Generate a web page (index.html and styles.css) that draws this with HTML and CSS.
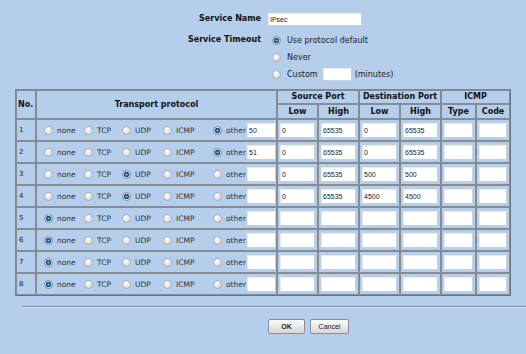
FILE: index.html
```html
<!DOCTYPE html>
<html>
<head>
<meta charset="utf-8">
<link rel="stylesheet" href="styles.css">
</head>
<body>
<div class="top">
  <div class="lbl name-lbl">Service Name</div>
  <div><input class="txt name-in" type="text" value="IPsec"></div>
  <div class="lbl">Service Timeout</div>
  <div class="opts">
    <div class="line"><input class="rb" type="radio" name="to" checked><span>Use protocol default</span></div>
    <div class="line"><input class="rb" type="radio" name="to"><span>Never</span></div>
    <div class="line"><input class="rb" type="radio" name="to"><span>Custom</span><input class="txt custom-in" type="text"><span class="mins">(minutes)</span></div>
  </div>
</div>

<table class="grid">
  <colgroup>
    <col class="c-no"><col class="c-tp"><col class="c-p"><col class="c-p"><col class="c-p"><col class="c-p"><col class="c-i"><col class="c-i2">
  </colgroup>
  <thead>
    <tr class="h1">
      <th rowspan="2" class="no-h">No.</th>
      <th rowspan="2">Transport protocol</th>
      <th colspan="2">Source Port</th>
      <th colspan="2">Destination Port</th>
      <th colspan="2">ICMP</th>
    </tr>
    <tr class="h2">
      <th>Low</th><th>High</th><th>Low</th><th>High</th><th>Type</th><th>Code</th>
    </tr>
  </thead>
  <tbody>
    <tr>
      <td class="no">1</td>
      <td class="tp"><div class="prot"><span class="opt o1"><input class="rb" type="radio" name="p1"><span>none</span></span><span class="opt o2"><input class="rb" type="radio" name="p1"><span>TCP</span></span><span class="opt o3"><input class="rb" type="radio" name="p1"><span>UDP</span></span><span class="opt o4"><input class="rb" type="radio" name="p1"><span>ICMP</span></span><span class="opt o5"><input class="rb" type="radio" name="p1" checked><span>other</span></span><input class="txt oth" type="text" value="50"></div></td>
      <td><input class="txt" type="text" value="0"></td><td><input class="txt" type="text" value="65535"></td><td><input class="txt" type="text" value="0"></td><td><input class="txt" type="text" value="65535"></td><td><input class="txt" type="text"></td><td><input class="txt" type="text"></td>
    </tr>
    <tr>
      <td class="no">2</td>
      <td class="tp"><div class="prot"><span class="opt o1"><input class="rb" type="radio" name="p2"><span>none</span></span><span class="opt o2"><input class="rb" type="radio" name="p2"><span>TCP</span></span><span class="opt o3"><input class="rb" type="radio" name="p2"><span>UDP</span></span><span class="opt o4"><input class="rb" type="radio" name="p2"><span>ICMP</span></span><span class="opt o5"><input class="rb" type="radio" name="p2" checked><span>other</span></span><input class="txt oth" type="text" value="51"></div></td>
      <td><input class="txt" type="text" value="0"></td><td><input class="txt" type="text" value="65535"></td><td><input class="txt" type="text" value="0"></td><td><input class="txt" type="text" value="65535"></td><td><input class="txt" type="text"></td><td><input class="txt" type="text"></td>
    </tr>
    <tr>
      <td class="no">3</td>
      <td class="tp"><div class="prot"><span class="opt o1"><input class="rb" type="radio" name="p3"><span>none</span></span><span class="opt o2"><input class="rb" type="radio" name="p3"><span>TCP</span></span><span class="opt o3"><input class="rb" type="radio" name="p3" checked><span>UDP</span></span><span class="opt o4"><input class="rb" type="radio" name="p3"><span>ICMP</span></span><span class="opt o5"><input class="rb" type="radio" name="p3"><span>other</span></span><input class="txt oth" type="text"></div></td>
      <td><input class="txt" type="text" value="0"></td><td><input class="txt" type="text" value="65535"></td><td><input class="txt" type="text" value="500"></td><td><input class="txt" type="text" value="500"></td><td><input class="txt" type="text"></td><td><input class="txt" type="text"></td>
    </tr>
    <tr>
      <td class="no">4</td>
      <td class="tp"><div class="prot"><span class="opt o1"><input class="rb" type="radio" name="p4"><span>none</span></span><span class="opt o2"><input class="rb" type="radio" name="p4"><span>TCP</span></span><span class="opt o3"><input class="rb" type="radio" name="p4" checked><span>UDP</span></span><span class="opt o4"><input class="rb" type="radio" name="p4"><span>ICMP</span></span><span class="opt o5"><input class="rb" type="radio" name="p4"><span>other</span></span><input class="txt oth" type="text"></div></td>
      <td><input class="txt" type="text" value="0"></td><td><input class="txt" type="text" value="65535"></td><td><input class="txt" type="text" value="4500"></td><td><input class="txt" type="text" value="4500"></td><td><input class="txt" type="text"></td><td><input class="txt" type="text"></td>
    </tr>
    <tr>
      <td class="no">5</td>
      <td class="tp"><div class="prot"><span class="opt o1"><input class="rb" type="radio" name="p5" checked><span>none</span></span><span class="opt o2"><input class="rb" type="radio" name="p5"><span>TCP</span></span><span class="opt o3"><input class="rb" type="radio" name="p5"><span>UDP</span></span><span class="opt o4"><input class="rb" type="radio" name="p5"><span>ICMP</span></span><span class="opt o5"><input class="rb" type="radio" name="p5"><span>other</span></span><input class="txt oth" type="text"></div></td>
      <td><input class="txt" type="text"></td><td><input class="txt" type="text"></td><td><input class="txt" type="text"></td><td><input class="txt" type="text"></td><td><input class="txt" type="text"></td><td><input class="txt" type="text"></td>
    </tr>
    <tr>
      <td class="no">6</td>
      <td class="tp"><div class="prot"><span class="opt o1"><input class="rb" type="radio" name="p6" checked><span>none</span></span><span class="opt o2"><input class="rb" type="radio" name="p6"><span>TCP</span></span><span class="opt o3"><input class="rb" type="radio" name="p6"><span>UDP</span></span><span class="opt o4"><input class="rb" type="radio" name="p6"><span>ICMP</span></span><span class="opt o5"><input class="rb" type="radio" name="p6"><span>other</span></span><input class="txt oth" type="text"></div></td>
      <td><input class="txt" type="text"></td><td><input class="txt" type="text"></td><td><input class="txt" type="text"></td><td><input class="txt" type="text"></td><td><input class="txt" type="text"></td><td><input class="txt" type="text"></td>
    </tr>
    <tr>
      <td class="no">7</td>
      <td class="tp"><div class="prot"><span class="opt o1"><input class="rb" type="radio" name="p7" checked><span>none</span></span><span class="opt o2"><input class="rb" type="radio" name="p7"><span>TCP</span></span><span class="opt o3"><input class="rb" type="radio" name="p7"><span>UDP</span></span><span class="opt o4"><input class="rb" type="radio" name="p7"><span>ICMP</span></span><span class="opt o5"><input class="rb" type="radio" name="p7"><span>other</span></span><input class="txt oth" type="text"></div></td>
      <td><input class="txt" type="text"></td><td><input class="txt" type="text"></td><td><input class="txt" type="text"></td><td><input class="txt" type="text"></td><td><input class="txt" type="text"></td><td><input class="txt" type="text"></td>
    </tr>
    <tr>
      <td class="no">8</td>
      <td class="tp"><div class="prot"><span class="opt o1"><input class="rb" type="radio" name="p8" checked><span>none</span></span><span class="opt o2"><input class="rb" type="radio" name="p8"><span>TCP</span></span><span class="opt o3"><input class="rb" type="radio" name="p8"><span>UDP</span></span><span class="opt o4"><input class="rb" type="radio" name="p8"><span>ICMP</span></span><span class="opt o5"><input class="rb" type="radio" name="p8"><span>other</span></span><input class="txt oth" type="text"></div></td>
      <td><input class="txt" type="text"></td><td><input class="txt" type="text"></td><td><input class="txt" type="text"></td><td><input class="txt" type="text"></td><td><input class="txt" type="text"></td><td><input class="txt" type="text"></td>
    </tr>
  </tbody>
</table>

<div class="rule"></div>

<div class="buttons">
  <button class="btn btn-ok" type="button">OK</button>
  <button class="btn btn-cancel" type="button">Cancel</button>
</div>
</body>
</html>
```

FILE: styles.css
```css
html, body {
  margin: 0;
  padding: 0;
  background: #b4ceeb;
}
body {
  width: 526px;
  height: 354px;
  overflow: hidden;
  font-family: "DejaVu Sans", Verdana, sans-serif;
  font-size: 8px;
  color: #222;
}

.top {
  display: grid;
  grid-template-columns: 111px auto;
  column-gap: 6px;
  row-gap: 6px;
  padding: 12px 0 0 150px;
  align-items: start;
}
.lbl {
  font-weight: bold;
  color: #111;
  text-align: right;
  line-height: 16px;
}
.name-lbl {
  line-height: 14px;
}
.txt {
  box-sizing: border-box;
  margin: 0;
  background: #fff;
  border: 1px solid #c3d0de;
  box-shadow: inset 1px 1px 0 #e4eaf1;
  font-family: "Liberation Sans", Arial, sans-serif;
  font-size: 7px;
  color: #222;
  padding: 0 2px;
  outline: none;
}
.name-in {
  display: block;
  width: 95px;
  height: 14px;
}
.opts {
  display: flex;
  flex-direction: column;
  gap: 1px;
}
.line {
  display: flex;
  align-items: center;
  height: 16px;
}
.line .rb {
  margin: 0 6px 0 5px;
}
.custom-in {
  width: 30px;
  height: 14px;
  margin-left: 4px;
}
.mins {
  margin-left: 3px;
}

.rb {
  appearance: none;
  -webkit-appearance: none;
  box-sizing: border-box;
  width: 9px;
  height: 9px;
  margin: 0;
  flex: none;
  border-radius: 50%;
  border: 1px solid #aeb2b7;
  background: radial-gradient(circle at 40% 35%, #fdfdfd 0, #e4e4e4 55%, #c8c8c8 100%);
}
.rb:checked {
  border-color: #7d8896;
  background: radial-gradient(circle at 50% 50%, #8fd6ff 0, #2d8fe0 0.9px, #124f98 1.9px, #0d3568 2.4px, #e2e5e9 2.9px, #c8ccd2 100%);
}

.grid {
  margin: 7px 0 0 15px;
  width: 495px;
  table-layout: fixed;
  border-collapse: separate;
  border-spacing: 0;
  border: 1px solid #7d848c;
  border-right-color: #6e757d;
  border-bottom-color: #6e757d;
}
.c-no { width: 20px; }
.c-tp { width: 241px; }
.c-p { width: 41px; }
.c-i { width: 35px; }
.c-i2 { width: 34px; }

.grid th, .grid td {
  border: 1px solid #868c93;
  padding: 0;
}
.grid th {
  font-weight: bold;
  color: #111;
  text-align: center;
}
.h1 th {
  height: 12px;
  line-height: 12px;
}
.h2 th {
  height: 13px;
  line-height: 13px;
}
.grid th.no-h {
  text-align: left;
  padding-left: 1px;
}
.grid td {
  padding: 2px 2px 2px 1px;
  height: 16px;
}
.grid td.no {
  font-size: 7px;
  padding-left: 2px;
  vertical-align: middle;
}
.grid td .txt {
  display: block;
  width: 100%;
  height: 16px;
}
.grid td.tp {
  padding: 2px 1px 2px 7px;
  font-size: 7.5px;
  color: #333;
}
.prot {
  display: flex;
  align-items: center;
  height: 16px;
}
.opt {
  display: flex;
  align-items: center;
  flex: none;
}
.opt .rb {
  margin-right: 4px;
}
.o1 { width: 40px; }
.o2 { width: 38px; }
.o3 { width: 41px; }
.o4 { width: 50px; }
.grid td .txt.oth {
  width: 30px;
  margin-left: auto;
}

.rule {
  margin: 10px 0 0 22px;
  height: 0;
  border-top: 1px solid #878c93;
  border-bottom: 1px solid #d6e4f3;
}

.buttons {
  display: flex;
  gap: 5px;
  padding: 11px 0 0 268px;
}
.btn {
  box-sizing: border-box;
  height: 15px;
  margin: 0;
  padding: 0;
  border: 1px solid #8b8e92;
  border-radius: 2px;
  background: linear-gradient(#fbfbfb, #e9e9e9 50%, #d8d8d8);
  font-family: "Liberation Sans", Arial, sans-serif;
  font-size: 7px;
  color: #222;
}
.btn-ok {
  width: 37px;
  font-weight: bold;
}
.btn-cancel {
  width: 39px;
}
```
